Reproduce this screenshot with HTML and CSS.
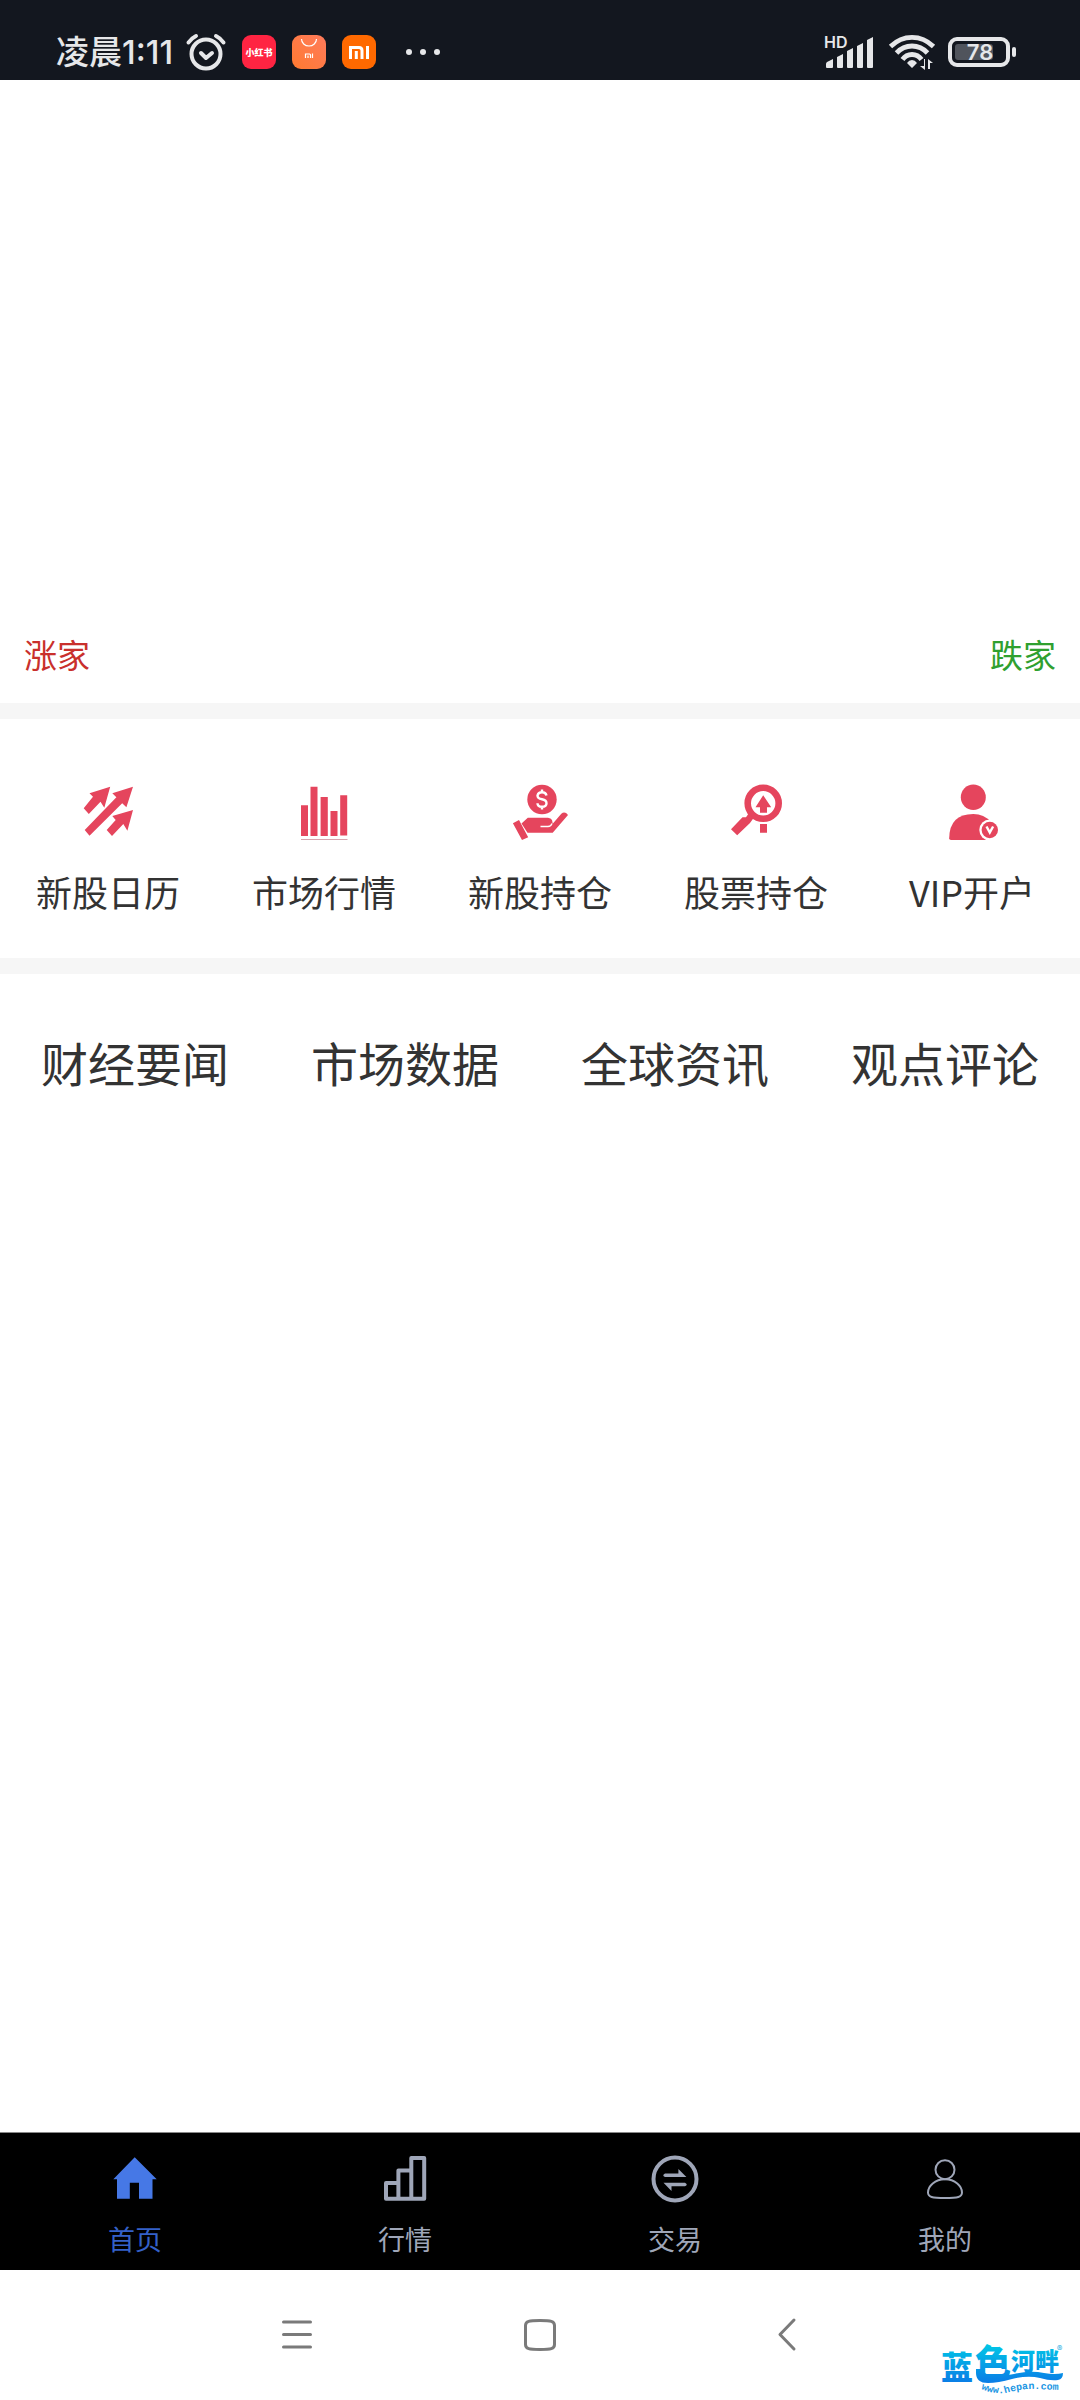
FILE: index.html
```html
<!DOCTYPE html>
<html lang="zh-CN">
<head>
<meta charset="utf-8">
<meta name="viewport" content="width=device-width, initial-scale=1">
<title>首页</title>
<link rel="stylesheet" href="styles.css">
</head>
<body>
<header class="status">
  <div class="status-left">
    <time class="clock">凌晨1:11</time>
    <svg class="alarm" viewBox="0 0 40 38" width="40" height="38" fill="none" stroke="#e6e7e9" stroke-width="4" stroke-linecap="round" stroke-linejoin="round"><circle cx="20" cy="21" r="14.5"/><path d="M2.500 9.500Q5 5.500 10 3M37.500 9.500Q35 5.500 30 3M15 20l5 5 6-5"/></svg>
    <svg class="app" viewBox="0 0 34 34" width="34" height="34"><rect width="34" height="34" rx="9" fill="#ff2442"/><text x="17" y="21" text-anchor="middle" class="app-text">小红书</text></svg>
    <svg class="app" viewBox="0 0 34 34" width="34" height="34"><defs><linearGradient id="shop" x1="0" y1="1" x2="1" y2="0"><stop offset="0" stop-color="#ff7a30"/><stop offset="1" stop-color="#ff7b5c"/></linearGradient></defs><rect width="34" height="34" rx="9" fill="url(#shop)"/><path d="M9.500 4a7.500 7 0 0 0 15 0M13.500 23v-4h4q1 0 1 1v3M16 20.500V23M20.500 18.500V23" fill="none" stroke="#fff" stroke-width="1.200"/></svg>
    <svg class="app" viewBox="0 0 34 34" width="34" height="34"><rect width="34" height="34" rx="9" fill="#ff6900"/><path d="M8.500 24V12.500H17q3 0 3 3V24M14.300 16v8M25.500 11v13" fill="none" stroke="#fff" stroke-width="3"/></svg>
    <svg class="more" viewBox="0 0 36 8" width="36" height="8" fill="#e6e7e9"><circle cx="4" cy="4" r="3"/><circle cx="18" cy="4" r="3"/><circle cx="32" cy="4" r="3"/></svg>
  </div>
  <div class="status-right">
    <svg viewBox="0 0 52 36" width="52" height="36" fill="#e6e7e9"><text x="0" y="14" class="hd">HD</text><path d="M2 33v-3q0-1 1-2l6-3v8q0 1-1 1H3q-1 0-1-1zM13 33V23l6-3v13q0 1-1 1h-4q-1 0-1-1zM23 33V17l6-3v19q0 1-1 1h-4q-1 0-1-1zM33 33V12l6-3v24q0 1-1 1h-4q-1 0-1-1zM43 33V6l6-3v30q0 1-1 1h-4q-1 0-1-1z"/></svg>
    <svg viewBox="0 0 48 36" width="48" height="36"><g fill="none" stroke="#e6e7e9" stroke-width="4.800"><path d="M2.500 12.500Q12 3.400 24 3.400t21.500 9.100M8.500 19Q15 12 24 12t15.500 7M14.500 25.500Q18 20.500 24 20.500t9.500 5"/></g><path d="M24 34l-5-5q2-3 5-3t5 3zM36 25v7h-4l5 4v-11zM40 35V25l5 4h-3v6z" fill="#e6e7e9"/></svg>
    <svg viewBox="0 0 70 30" width="70" height="30"><rect x="2" y="2" width="58" height="26" rx="7" fill="none" stroke="#e6e7e9" stroke-width="4"/><rect x="7" y="7" width="38" height="16" rx="3" fill="#50545c"/><rect x="64" y="10" width="4" height="10" rx="2" fill="#e6e7e9"/><text x="32" y="23" text-anchor="middle" class="charge">78</text></svg>
  </div>
</header>
<main>
  <section class="market">
    <span class="up">涨家</span>
    <span class="down">跌家</span>
  </section>
  <nav class="quick">
    <a href="#calendar"><svg viewBox="0 0 64 64" width="64" height="64"><path d="M34.200 6.700L13.500 13.300l3.500 3.400L7.700 28.300l5.100 5.700 11.700-12.300 3.800 6zM57 6.700l-20.700 6.600 4.100 4L8.700 50l4.800 5.700L46.200 23.300l4.200 4zM57 30l-20.700 6 3.400 4-9 10 5.300 6 11.300-12 4.100 6.700z"/></svg>新股日历</a>
    <a href="#quotes"><svg viewBox="0 0 64 64" width="64" height="64"><path d="M9 25.300h7V56H9zM18.500 6.700h7V56h-7zM28.600 17h7.200v39h-7.200zM38.500 31h7v25h-7zM48.200 15.300h7V55.500h-7z"/><path d="M9 59h46.500v1H9z" fill="#d5a5af"/></svg>市场行情</a>
    <a href="#new-holdings"><svg viewBox="0 0 64 64" width="64" height="64"><circle cx="34" cy="19.500" r="14.700"/><path d="M38.500 15.500q-.8-3.300-4.500-3.300t-4.500 3.300q0 3 4.500 3.800t4.500 3.900q0 3.500-4.500 3.500t-4.500-3.500M34 9.500v3M34 26.500v3" fill="none" stroke="#fff" stroke-width="2.400"/><path d="M4.900 43.300L11 40l9.200 17.300L14 60zM13.500 43.500l6.300-5.800H40q3.600.500 4.200 3l.5 3 8.600-10q3.700-2.700 6.700 1.300L44.700 52.700H19.500z"/><path d="M32.500 46.500H40q3 0 4-3" fill="none" stroke="#fff" stroke-width="1.300"/></svg>新股持仓</a>
    <a href="#stock-holdings"><svg viewBox="0 0 64 64" width="64" height="64"><circle cx="39.200" cy="23.300" r="15.500" fill="none" stroke="#e5455d" stroke-width="6.600"/><path d="M39.200 15.300l8 12H43v5.400h-7v-5.400h-4.500zM36 44h7v8.700h-7zM7 49.300l11.500-12H22l3-4.300 4.600 5-3.600 5-12.800 12.300z"/></svg>股票持仓</a>
    <a href="#vip"><svg viewBox="0 0 64 64" width="64" height="64"><ellipse cx="33.300" cy="17.300" rx="12.500" ry="12.700"/><path d="M9.200 58.300Q9.500 34 33.300 34 44 34 51 42V60H11q-1.800 0-1.800-1.700z"/><circle cx="49.800" cy="50" r="10.500" fill="#fff"/><circle cx="49.800" cy="50" r="8.200"/><path d="M46.500 46.500l3.300 6 3.300-6" fill="none" stroke="#fff" stroke-width="2.400"/></svg>VIP开户</a>
  </nav>
  <div class="tabs">
    <button type="button">财经要闻</button>
    <button type="button">市场数据</button>
    <button type="button">全球资讯</button>
    <button type="button">观点评论</button>
  </div>
</main>
<nav class="bottom">
  <a href="#home" class="active"><svg viewBox="0 0 48 48" width="48" height="48" fill="#4678e6"><path d="M23.700 2.300L45.700 24.300h-4.200v19.400H28v-16h-9.200v16H6V24.300H2.300z"/></svg>首页</a>
  <a href="#market"><svg viewBox="0 0 48 48" width="48" height="48" fill="none" stroke="#9fa6b8" stroke-width="4" stroke-linejoin="round"><path d="M17.400 28H5v15.700h38.200V3H30.300v12.500H17.400zM17.400 28v15.700M30.300 15.500v28.200"/></svg>行情</a>
  <a href="#trade"><svg viewBox="0 0 48 48" width="48" height="48"><circle cx="24" cy="24" r="21.500" fill="none" stroke="#9fa6b8" stroke-width="4"/><path d="M14 18.500h13.400V14l8 8H14q-3.500-1.700 0-3.500zM34 31.200H20.500V36l-8-8.300H34q3.500 1.800 0 3.500z" fill="#9fa6b8"/></svg>交易</a>
  <a href="#mine"><svg viewBox="0 0 48 48" width="48" height="48" fill="none" stroke="#9fa6b8" stroke-width="2"><circle cx="24" cy="14.700" r="9.500"/><path d="M24 24.300C14 24.300 7 31 7 37.500c0 4.500 4 5.500 17 5.500s17-1 17-5.500c0-6.500-7-13.200-17-13.200z"/></svg>我的</a>
</nav>
<footer class="system">
  <button type="button" aria-label="菜单"><svg viewBox="0 0 36 36" width="36" height="36"><path d="M4.500 5h27M4.500 17.500h27M4.500 30h27"/></svg></button>
  <button type="button" aria-label="主屏幕"><svg viewBox="0 0 36 36" width="36" height="36"><path d="M18 3.500c11 0 14.500.5 14.500 5v19c0 4.500-3.500 5-14.500 5s-14.500-.5-14.500-5v-19c0-4.500 3.500-5 14.500-5z"/></svg></button>
  <button type="button" aria-label="返回"><svg viewBox="0 0 36 36" width="36" height="36"><path d="M29 3L15 17.500 29 32"/></svg></button>
  <svg class="mark" viewBox="0 0 132 60" width="132" height="60">
    <defs><linearGradient id="water" gradientUnits="userSpaceOnUse" x1="0" y1="4" x2="0" y2="44"><stop offset="0" stop-color="#00c8e6"/><stop offset="1" stop-color="#0a7ae6"/></linearGradient></defs>
    <g class="mark-name" fill="url(#water)"><text x="1" y="39" class="mark-blue">蓝</text><text x="35" y="36" class="mark-color">色</text><text x="71" y="30" class="mark-river">河畔</text></g>
    <path d="M36 29v4q0 10 12 10 10 0 24-4 16-4 28-1 10 3 18 2 5-1 5-7-8 2-19 0-14-3-30 1-12 3-24 1-8-1-8-6z" fill="url(#water)"/>
    <text x="117" y="14" class="mark-reg">®</text>
    <path id="arc" d="M41 49Q52 54 66 53 84 48 98 49T122 50" fill="none"/>
    <text class="mark-url"><textPath href="#arc">www.hepan.com</textPath></text>
  </svg>
</footer>
</body>
</html>
```
FILE: styles.css
```css
* { box-sizing: border-box; }

body {
  margin: 0;
  min-height: 100vh;
  display: flex;
  flex-direction: column;
  background: #fff;
  color: #333;
  font-family: "Noto Sans CJK SC", sans-serif;
}

svg { display: block; flex: none; overflow: visible; }
a { color: inherit; text-decoration: none; }
button { border: 0; padding: 0; background: none; color: inherit; font: inherit; }

/* Status bar */
.status {
  height: 80px;
  padding: 24px 62px 0 56px;
  display: flex;
  justify-content: space-between;
  background: #13171f;
  color: #e6e7e9;
}
.status-left, .status-right { display: flex; align-items: center; height: 56px; }
.clock {
  width: 130px;
  font: 500 33px/56px Inter, "Noto Sans CJK SC", sans-serif;
  white-space: nowrap;
}
.app { margin-left: 16px; }
.more { margin-left: 29px; }
.status-right { gap: 12px; }
.app-text { font-size: 9px; font-weight: 900; fill: #fff; }
.hd { font: 600 16px Inter, sans-serif; }
.charge { font: 600 22px Inter, sans-serif; fill: #e6e7e9; }

/* Advancing and declining counts */
.market {
  min-height: 623px;
  padding: 0 24px 25px;
  display: flex;
  justify-content: space-between;
  align-items: flex-end;
  font-size: 33px;
  line-height: 48px;
}
.up { color: #c9302c; }
.down { color: #2fa02f; }

/* Shortcut grid */
.quick {
  display: grid;
  grid-template-columns: repeat(5, 1fr);
  padding: 61px 0 39px;
  border: solid #f6f6f6;
  border-width: 16px 0;
  font-size: 36px;
  line-height: 56px;
}
.quick a { display: flex; flex-direction: column; align-items: center; gap: 19px; }
.quick svg { fill: #e5455d; }

/* News categories */
.tabs {
  display: grid;
  grid-template-columns: repeat(4, 1fr);
  padding-top: 54px;
  font-size: 47px;
  line-height: 68px;
}

/* App tab bar */
.bottom {
  display: grid;
  grid-template-columns: repeat(4, 1fr);
  margin-top: auto;
  padding: 22px 0 11px;
  border-top: 1px solid #888;
  background: #000;
  color: #9fa6b8;
  font-size: 27px;
  line-height: 40px;
}
.bottom a { display: flex; flex-direction: column; align-items: center; gap: 16px; }
.bottom .active { color: #3461c8; }

/* System navigation */
.system {
  position: relative;
  height: 130px;
  padding: 0 22%;
  display: grid;
  grid-template-columns: 118px 1fr 118px;
  align-items: center;
}
.system button { display: flex; justify-content: center; }
.system button svg { fill: none; stroke: #7a7a7a; stroke-width: 3; stroke-linecap: round; stroke-linejoin: round; }

.mark { position: absolute; right: 8px; bottom: 0; }
.mark-name { font-weight: 900; }
.mark-blue { font-size: 32px; }
.mark-color { font-size: 36px; }
.mark-river { font-size: 24px; }
.mark-reg { font-size: 11px; fill: #18a8e0; }
.mark-url { font: bold 10px "Liberation Mono", monospace; fill: #2196e3; }
```
